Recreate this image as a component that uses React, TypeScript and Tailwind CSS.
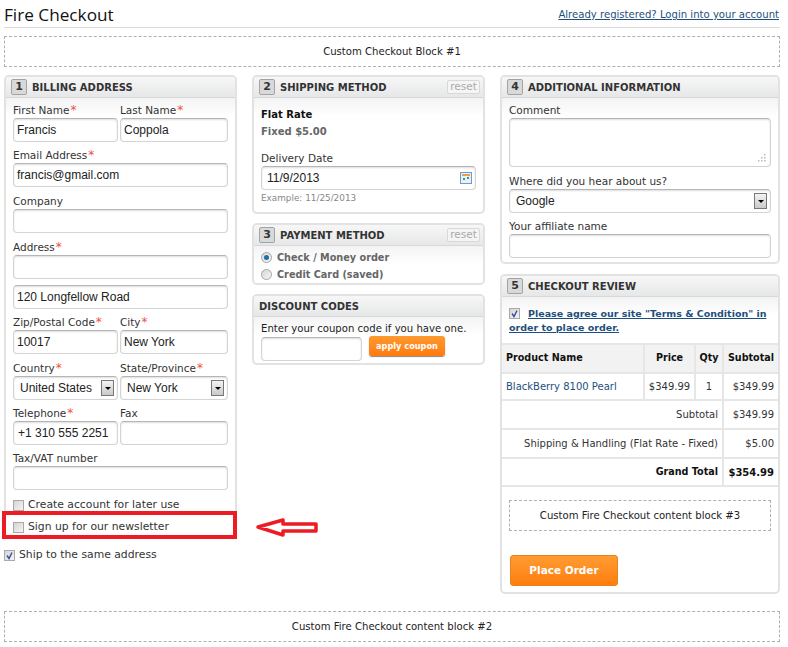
const uiFont = "font-['DejaVu_Sans',sans-serif]";

function Star() {
    return <span className="text-[#f0503c] text-[12px] leading-none ml-[1px]">*</span>;
}

function Label({ text, required, className }: { text: string; required?: boolean; className?: string }) {
    return (
        <div className={`h-[14px] leading-[13px] text-[10.5px] text-[#333] whitespace-nowrap ${className ?? ""}`}>
            {text}{required && <Star />}
        </div>
    );
}

function Input({ value, className, children }: { value?: string; className?: string; children?: React.ReactNode }) {
    return (
        <div className={`relative h-[24px] rounded-[4px] border border-[#d4d4d4] border-t-[#b5b5b5] bg-white pl-[3px] shadow-[inset_0_1px_2px_#ddd] font-['Liberation_Sans',sans-serif] text-[12px] leading-[23px] text-[#222] whitespace-nowrap ${className ?? ""}`}>
            {value}
            {children}
        </div>
    );
}

function Select({ value, className }: { value: string; className?: string }) {
    return (
        <Input className={`pl-[6px] ${className ?? ""}`} value={value}>
            <span className="absolute right-[3px] top-[3px] flex h-[16px] w-[13px] items-center justify-center border border-[#777] bg-gradient-to-b from-[#f4f4f4] to-[#c9c9c9]">
                <span className="h-0 w-0 border-x-[3px] border-t-[3px] border-x-transparent border-t-black" />
            </span>
        </Input>
    );
}

function Check({ checked }: { checked?: boolean }) {
    return (
        <span className="flex h-[11px] w-[11px] shrink-0 items-center justify-center border border-[#a9a9a9] bg-gradient-to-br from-[#d5d5d5] to-[#f4f4f4]">
            {checked && (
                <svg viewBox="0 0 9 9" className="h-[9px] w-[9px]">
                    <path d="M2 4.5 L4 7.5 L7 1.5" fill="none" stroke="#3a4f9c" strokeWidth="1.4" />
                </svg>
            )}
        </span>
    );
}

function Radio({ checked }: { checked?: boolean }) {
    return (
        <span className="flex h-[11px] w-[11px] shrink-0 items-center justify-center rounded-full border border-[#a5a5a5] bg-gradient-to-br from-[#d8d8d8] to-[#f6f6f6]">
            {checked && <span className="h-[5px] w-[5px] rounded-full bg-[#1d6fa8]" />}
        </span>
    );
}

function Panel({ num, title, reset, className, children }: { num?: number; title: string; reset?: boolean; className?: string; children: React.ReactNode }) {
    return (
        <section className={`rounded-[5px] border-2 border-[#e2e2e2] bg-white ${className ?? ""}`}>
            <header className="flex h-[21px] items-center border-b border-[#d8d8d8] bg-gradient-to-b from-[#f7f7f7] to-[#e6e7e8] pl-[5px] pr-[3px] rounded-t-[3px]">
                {num && (
                    <span className="mr-[5px] flex h-[16px] w-[16px] items-center justify-center rounded-[2px] border border-[#a3a3a3] bg-[#d9d9d9] text-[11px] font-bold text-[#333]">{num}</span>
                )}
                <h2 className="text-[10px] font-bold text-[#333] whitespace-nowrap">{title}</h2>
                {reset && (
                    <span className="ml-auto flex h-[14px] w-[33px] items-center justify-center rounded-[2px] border border-[#d8d8d8] bg-[#f5f5f5] text-[10.5px] text-[#aaa]">reset</span>
                )}
            </header>
            <div className="bg-gradient-to-b from-[#f3f3f3] to-white to-[18px] rounded-b-[3px]">{children}</div>
        </section>
    );
}

function Dashed({ text, className }: { text: string; className?: string }) {
    return (
        <div className={`flex items-center justify-center border border-dashed border-[#b0b0b0] text-[10.1px] text-[#222] ${className ?? ""}`}>{text}</div>
    );
}

function BillingForm() {
    return (
        <div className="px-[7px] pt-[6px] pb-[5px]">
            <div className="grid grid-cols-[105px_108px] gap-x-[2px]">
                <div><Label text="First Name" required /><Input value="Francis" /></div>
                <div><Label text="Last Name" required /><Input value="Coppola" /></div>
            </div>
            <Label text="Email Address" required className="mt-[7px]" />
            <Input value="francis@gmail.com" />
            <Label text="Company" className="mt-[8px]" />
            <Input />
            <Label text="Address" required className="mt-[8px]" />
            <Input />
            <Input value="120 Longfellow Road" className="mt-[6px]" />
            <div className="mt-[7px] grid grid-cols-[105px_108px] gap-x-[2px]">
                <div><Label text="Zip/Postal Code" required /><Input value="10017" /></div>
                <div><Label text="City" required /><Input value="New York" /></div>
            </div>
            <div className="mt-[8px] grid grid-cols-[105px_108px] gap-x-[2px]">
                <div><Label text="Country" required /><Select value="United States" /></div>
                <div><Label text="State/Province" required /><Select value="New York" /></div>
            </div>
            <div className="mt-[7px] grid grid-cols-[105px_108px] gap-x-[2px]">
                <div><Label text="Telephone" required /><Input value="+1 310 555 2251" className="pl-[4px]" /></div>
                <div><Label text="Fax" /><Input /></div>
            </div>
            <Label text="Tax/VAT number" className="mt-[7px]" />
            <Input />
            <div className="mt-[8px] flex h-[14px] items-center gap-[4px] text-[10.8px] text-[#333]"><Check />Create account for later use</div>
            <div className="mt-[8px] flex h-[14px] items-center gap-[4px] text-[10.8px] text-[#333]"><Check />Sign up for our newsletter</div>
        </div>
    );
}

const reviewRows = [
    { label: "Subtotal", value: "$349.99", h: "h-[29px]" },
    { label: "Shipping & Handling (Flat Rate - Fixed)", value: "$5.00", h: "h-[29px]" },
    { label: "Grand Total", value: "$354.99", h: "h-[28px]", bold: true },
];

function ReviewTable() {
    return (
        <table className="w-full table-fixed border-collapse text-[10px] text-[#333]">
            <colgroup>
                <col className="w-[142px]" />
                <col className="w-[51px]" />
                <col className="w-[28px]" />
                <col />
            </colgroup>
            <thead>
                <tr className="h-[29px] bg-[#f2f2f2] text-[9.6px] font-bold text-[#111]">
                    <th className="border-y-2 border-r-2 border-[#e6e6e6] pl-[4px] text-left">Product Name</th>
                    <th className="border-y-2 border-r-2 border-[#e6e6e6] text-center">Price</th>
                    <th className="border-y-2 border-r-2 border-[#e6e6e6] text-center">Qty</th>
                    <th className="border-y-2 border-[#e6e6e6] text-center">Subtotal</th>
                </tr>
            </thead>
            <tbody>
                <tr className="h-[27px]">
                    <td className="border-b-2 border-r-2 border-[#e6e6e6] pl-[4px] text-[#1e4f7c] whitespace-nowrap">BlackBerry 8100 Pearl</td>
                    <td className="border-b-2 border-r-2 border-[#e6e6e6] text-center">$349.99</td>
                    <td className="border-b-2 border-r-2 border-[#e6e6e6] text-center">1</td>
                    <td className="border-b-2 border-[#e6e6e6] pr-[4px] text-right">$349.99</td>
                </tr>
                {reviewRows.map((row) => (
                    <tr key={row.label} className={`${row.h} ${row.bold ? "font-bold text-[#111]" : ""}`}>
                        <td colSpan={3} className={`border-b-2 border-r-2 border-[#e6e6e6] pr-[4px] text-right whitespace-nowrap ${row.bold ? "text-[9.6px]" : ""}`}>{row.label}</td>
                        <td className="border-b-2 border-[#e6e6e6] pr-[4px] text-right">{row.value}</td>
                    </tr>
                ))}
            </tbody>
        </table>
    );
}

export default function App() {
    return (
        <div className={`relative h-[647px] w-[788px] overflow-hidden bg-white ${uiFont}`}>
            <div className="mx-[4px] flex h-[28px] w-[776px] items-end justify-between border-b border-[#dcdcdc]">
                <h1 className="font-['Open_Sans',sans-serif] text-[17.2px] leading-[24px] text-[#111]">Fire Checkout</h1>
                <a className="mb-[5px] mr-[1px] text-[10.1px] leading-[14px] text-[#1e4f7c] underline">Already registered? Login into your account</a>
            </div>

            <Dashed text="Custom Checkout Block #1" className="mx-[4px] mt-[8px] h-[31px] w-[776px]" />

            <div className="mt-[8px] flex h-[535px] items-start pl-[4px]">
                <div className="w-[233px]">
                    <Panel num={1} title="BILLING ADDRESS" className="h-[463px] border-b-0 rounded-b-none">
                        <BillingForm />
                    </Panel>
                    <div className="mt-[9px] flex items-center gap-[4px] text-[10.8px] text-[#333]"><Check checked />Ship to the same address</div>
                </div>

                <div className="ml-[15px] flex w-[233px] flex-col gap-[9px]">
                    <Panel num={2} title="SHIPPING METHOD" reset className="h-[139px]">
                        <div className="px-[7px] pt-[10px]">
                            <div className="text-[10px] font-bold leading-[14px] text-[#111]">Flat Rate</div>
                            <div className="mt-[3px] text-[10px] font-bold leading-[14px] text-[#666]">Fixed $5.00</div>
                            <Label text="Delivery Date" className="mt-[13px] text-[10.1px]" />
                            <Input value="11/9/2013" className="pl-[5px]">
                                <svg viewBox="0 0 12 12" className="absolute right-[3px] top-[5px] h-[12px] w-[12px]">
                                    <rect x="0.5" y="0.5" width="11" height="11" fill="#e8f0fa" stroke="#6d9bd8" />
                                    <rect x="2" y="2" width="8" height="2" fill="#e8a04a" />
                                    <rect x="3" y="6" width="2" height="2" fill="#4aa04a" />
                                    <rect x="7" y="5" width="2" height="2" fill="#4aa04a" />
                                </svg>
                            </Input>
                            <div className="mt-[1px] text-[8.85px] leading-[14px] text-[#888]">Example: 11/25/2013</div>
                        </div>
                    </Panel>

                    <Panel num={3} title="PAYMENT METHOD" reset className="h-[62px]">
                        <div className="px-[7px] pt-[3px] text-[9.7px] font-bold leading-[17px] text-[#666]">
                            <div className="flex items-center gap-[5px]"><Radio checked />Check / Money order</div>
                            <div className="flex items-center gap-[5px]"><Radio />Credit Card (saved)</div>
                        </div>
                    </Panel>

                    <Panel title="DISCOUNT CODES" className="h-[71px]">
                        <div className="px-[7px] pt-[4px]">
                            <div className="h-[15px] text-[10.1px] leading-[15px] text-[#222] whitespace-nowrap">Enter your coupon code if you have one.</div>
                            <div className="flex items-start gap-[7px]">
                                <Input className="mt-[1px] h-[20px] w-[101px]" />
                                <button className="flex h-[20px] w-[76px] items-center justify-center rounded-[3px] bg-gradient-to-b from-[#ff9a2e] to-[#ff7a0a] text-[8.2px] font-bold text-white shadow-[0_1px_1px_#888]">apply coupon</button>
                            </div>
                        </div>
                    </Panel>
                </div>

                <div className="ml-[15px] flex w-[280px] flex-col gap-[10px]">
                    <Panel num={4} title="ADDITIONAL INFORMATION" className="h-[189px]">
                        <div className="px-[7px] pt-[6px]">
                            <Label text="Comment" />
                            <Input className="h-[49px]">
                                <svg viewBox="0 0 10 10" className="absolute bottom-[3px] right-[3px] h-[10px] w-[10px]" fill="#bbb">
                                    <rect x="7" y="1" width="1.5" height="1.5" />
                                    <rect x="4" y="4" width="1.5" height="1.5" />
                                    <rect x="7" y="4" width="1.5" height="1.5" />
                                    <rect x="1" y="7" width="1.5" height="1.5" />
                                    <rect x="4" y="7" width="1.5" height="1.5" />
                                    <rect x="7" y="7" width="1.5" height="1.5" />
                                </svg>
                            </Input>
                            <Label text="Where did you hear about us?" className="mt-[8px]" />
                            <Select value="Google" />
                            <Label text="Your affiliate name" className="mt-[7px]" />
                            <Input />
                        </div>
                    </Panel>

                    <Panel num={5} title="CHECKOUT REVIEW" className="h-[320px]">
                        <div className="px-[7px] pt-[11px] pb-[8px] text-[9.5px] font-bold leading-[14px] text-[#1e4f7c]">
                            <Check checked />
                            <a className="underline -mt-[12px] block indent-[19px]">Please agree our site "Terms &amp; Condition" in order to place order.</a>
                        </div>
                        <ReviewTable />
                        <Dashed text="Custom Fire Checkout content block #3" className="mx-[7px] mt-[13px] h-[31px]" />
                        <button className="ml-[8px] mt-[24px] flex h-[31px] w-[108px] items-center justify-center rounded-[3px] border border-[#e8811a] bg-gradient-to-b from-[#ff9c30] to-[#ff7d0c] text-[10.5px] font-bold text-white">Place Order</button>
                    </Panel>
                </div>
            </div>

            <Dashed text="Custom Fire Checkout content block #2" className="absolute left-[4px] top-[611px] h-[31px] w-[776px]" />

            {/* annotation over the screenshot */}
            <div className="absolute left-[2px] top-[511px] h-[28px] w-[235px] border-[4px] border-[#ed1c24]" />
            <svg viewBox="0 0 64 22" className="absolute left-[254px] top-[516px] h-[22px] w-[64px]">
                <path d="M4 11 L29 4 L29 8 L62 8 L62 15 L29 15 L29 19 Z" fill="white" stroke="#ed1c24" strokeWidth="3.5" strokeLinejoin="round" />
            </svg>
        </div>
    );
}
